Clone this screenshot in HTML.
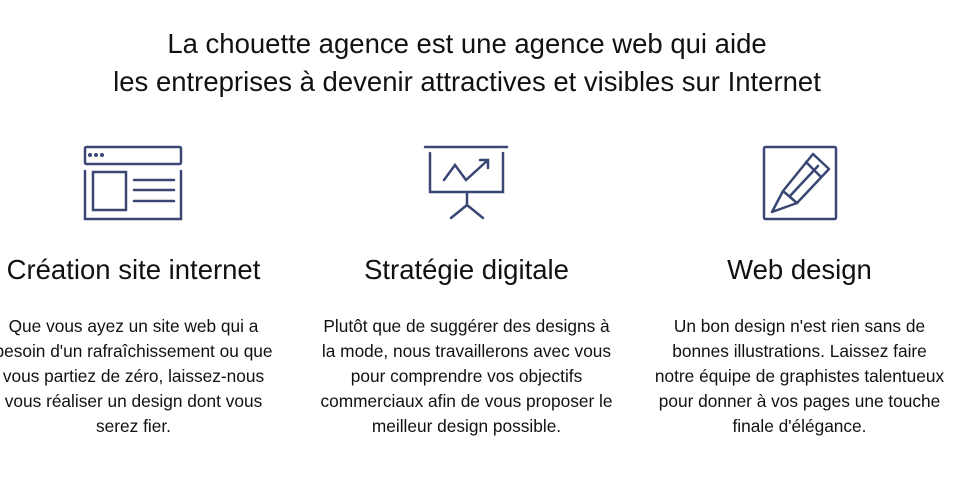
<!DOCTYPE html>
<html><head><meta charset="utf-8"><style>
body{margin:0;width:965px;height:490px;overflow:hidden;background:#fff;font-family:"Liberation Sans",sans-serif;color:#111;position:relative}
h1{position:absolute;left:-33px;width:1000px;top:25px;margin:0;text-align:center;font-weight:normal;font-size:27.5px;line-height:38px;color:#111}
.col{position:absolute;top:0;width:333px;text-align:center}
.col svg{position:absolute;top:140px}
h2{position:absolute;top:253px;left:0;width:333px;margin:0;font-weight:normal;font-size:27.5px;line-height:34px;color:#111}
p{position:absolute;top:314px;left:18px;width:297px;margin:0;font-size:17.3px;line-height:25px;color:#111}
</style></head><body>
<h1>La chouette agence est une agence web qui aide<br>les entreprises à devenir attractives et visibles sur Internet</h1>
<div class="col" style="left:-33px">
<svg style="left:110px" width="110" height="90" viewBox="77 140 110 90" fill="none" stroke="#3a4674" stroke-width="2.5" stroke-linecap="round">
<rect x="85" y="147" width="96" height="17" rx="1.5"/>
<path d="M85 171V219H181V171"/>
<rect x="93" y="172" width="33" height="38"/>
<path d="M134 180H174M134 190H174M134 201H174"/>
<circle cx="90" cy="155" r="2" fill="#3a4674" stroke="none"/><circle cx="96" cy="155" r="2" fill="#3a4674" stroke="none"/><circle cx="102" cy="155" r="2" fill="#3a4674" stroke="none"/>
</svg>
<h2>Création site internet</h2>
<p>Que vous ayez un site web qui a besoin d'un rafraîchissement ou que vous partiez de zéro, laissez-nous vous réaliser un design dont vous serez fier.</p>
</div>
<div class="col" style="left:300px">
<svg style="left:110px" width="110" height="90" viewBox="410 140 110 90" fill="none" stroke="#3a4674" stroke-width="2.5" stroke-linecap="round">
<path d="M425 147H507"/>
<path d="M430 153V192H503V153"/>
<path d="M444 180L455 165L466 180L488 160M480 160H488V168"/>
<path d="M467 192V205M467 205L451 218M467 205L483 218"/>
</svg>
<h2>Stratégie digitale</h2>
<p>Plutôt que de suggérer des designs à la mode, nous travaillerons avec vous pour comprendre vos objectifs commerciaux afin de vous proposer le meilleur design possible.</p>
</div>
<div class="col" style="left:633px">
<svg style="left:110px" width="110" height="90" viewBox="743 140 110 90" fill="none" stroke="#3a4674" stroke-width="2.5" stroke-linecap="round" stroke-linejoin="round">
<rect x="764" y="147" width="72" height="72" rx="1.5"/>
<path d="M813 154L829 169L797 203L783 191Z"/>
<path d="M783 191L772 212L797 203"/>
<path d="M806 162L821 177M790 196L818 166"/>
</svg>
<h2>Web design</h2>
<p>Un bon design n'est rien sans de bonnes illustrations. Laissez faire notre équipe de graphistes talentueux pour donner à vos pages une touche finale d'élégance.</p>
</div>
</body></html>
